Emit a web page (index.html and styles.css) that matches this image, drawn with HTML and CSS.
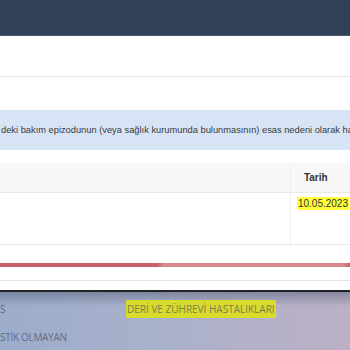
FILE: index.html
```html
<!DOCTYPE html>
<html>
    <head>
        <title>Tanı Kaydı</title>
        <meta name="viewport" content="width=device-width, initial-scale=1" />
        <meta charset="utf-8" />
        <link rel="stylesheet" href="styles.css">
    </head>
    <body>
        <div class="topbar"></div>
        <div class="panel"></div>
        <div class="info">deki bakım epizodunun (veya sağlık kurumunda bulunmasının) esas nedeni olarak hangi tanı kodlanmalıdır?</div>

        <table class="grid">
            <thead>
                <tr>
                    <th class="main"></th>
                    <th class="date">Tarih</th>
                </tr>
            </thead>
            <tbody>
                <tr>
                    <td class="main"></td>
                    <td class="date"><span class="mark">10.05.2023</span></td>
                </tr>
            </tbody>
        </table>

        <div class="progress">
            <div class="bar"></div>
        </div>
        <div class="rule"></div>

        <div class="shot">
            <div class="line">
                <span class="left">S</span>
                <span class="mark dim">DERİ VE ZÜHREVİ HASTALIKLARI</span>
            </div>
            <div class="line">
                <span class="left">STİK OLMAYAN</span>
            </div>
        </div>
    </body>
</html>
```

FILE: styles.css
```css
html {
    font-family: "Liberation Sans", Arial, sans-serif;
}
body {
    margin: 0;
    width: 350px;
    height: 350px;
    overflow: hidden;
    background: #fff;
}
.topbar {
    height: 35px;
    background: #2f4058;
    border-bottom: 1px solid #505a66;
}
.panel {
    height: 40px;
    border-bottom: 1px solid #e4e4e4;
    margin-bottom: 33px;
}
.info {
    height: 40px;
    line-height: 40px;
    background: #d6e4f5;
    color: #3a3a3a;
    font-size: 9.3px;
    padding-left: 1px;
    white-space: nowrap;
    overflow: hidden;
}
.grid {
    width: 100%;
    margin-top: 13px;
    border-collapse: collapse;
    font-size: 10px;
    color: #333;
}
.grid th {
    height: 27px;
    background: #f8f8f8;
    border-bottom: 1px solid #e9e9e9;
    text-align: left;
    font-weight: bold;
}
.grid td {
    height: 45px;
    vertical-align: top;
    padding-top: 5px;
    border-bottom: 1px solid #e9e9e9;
}
.grid .main {
    width: 293px;
}
.grid .date {
    border-left: 1px solid #efefef;
    white-space: nowrap;
}
.grid th.date {
    padding-left: 13px;
}
.grid td.date {
    padding-left: 6px;
}
.mark {
    background: #ffff3a;
    padding: 1px 1px;
}
.progress {
    margin-top: 18px;
    height: 4px;
    background: #f2d6d8;
}
.bar {
    height: 4px;
    background: linear-gradient(100deg, #c8606b 0, #c8606b 155px, #d98a91 162px, #d98a91 338px, #c8606b 345px);
}
.rule {
    margin-top: 13px;
    height: 1px;
    background: #e2e2e2;
    margin-bottom: 9px;
}
.shot {
    border-top: 2px solid #1f2126;
    height: 70px;
    background:
        linear-gradient(to bottom, rgba(90, 100, 125, 0.55), rgba(90, 100, 125, 0) 14px),
        linear-gradient(to right, #9cadc9, #a9b1cc 45%, #bcb0c4);
    font-family: "Open Sans", sans-serif;
    font-size: 10px;
    color: #646c8c;
    padding-top: 3px;
    box-sizing: border-box;
}
.line {
    display: flex;
    align-items: center;
    height: 28px;
}
.line .left {
    width: 126px;
}
.line .left:only-child {
    letter-spacing: -0.3px;
}
.mark.dim {
    background: #d8da2c;
    color: #7b7f4e;
    padding: 2px 1px;
}
```
